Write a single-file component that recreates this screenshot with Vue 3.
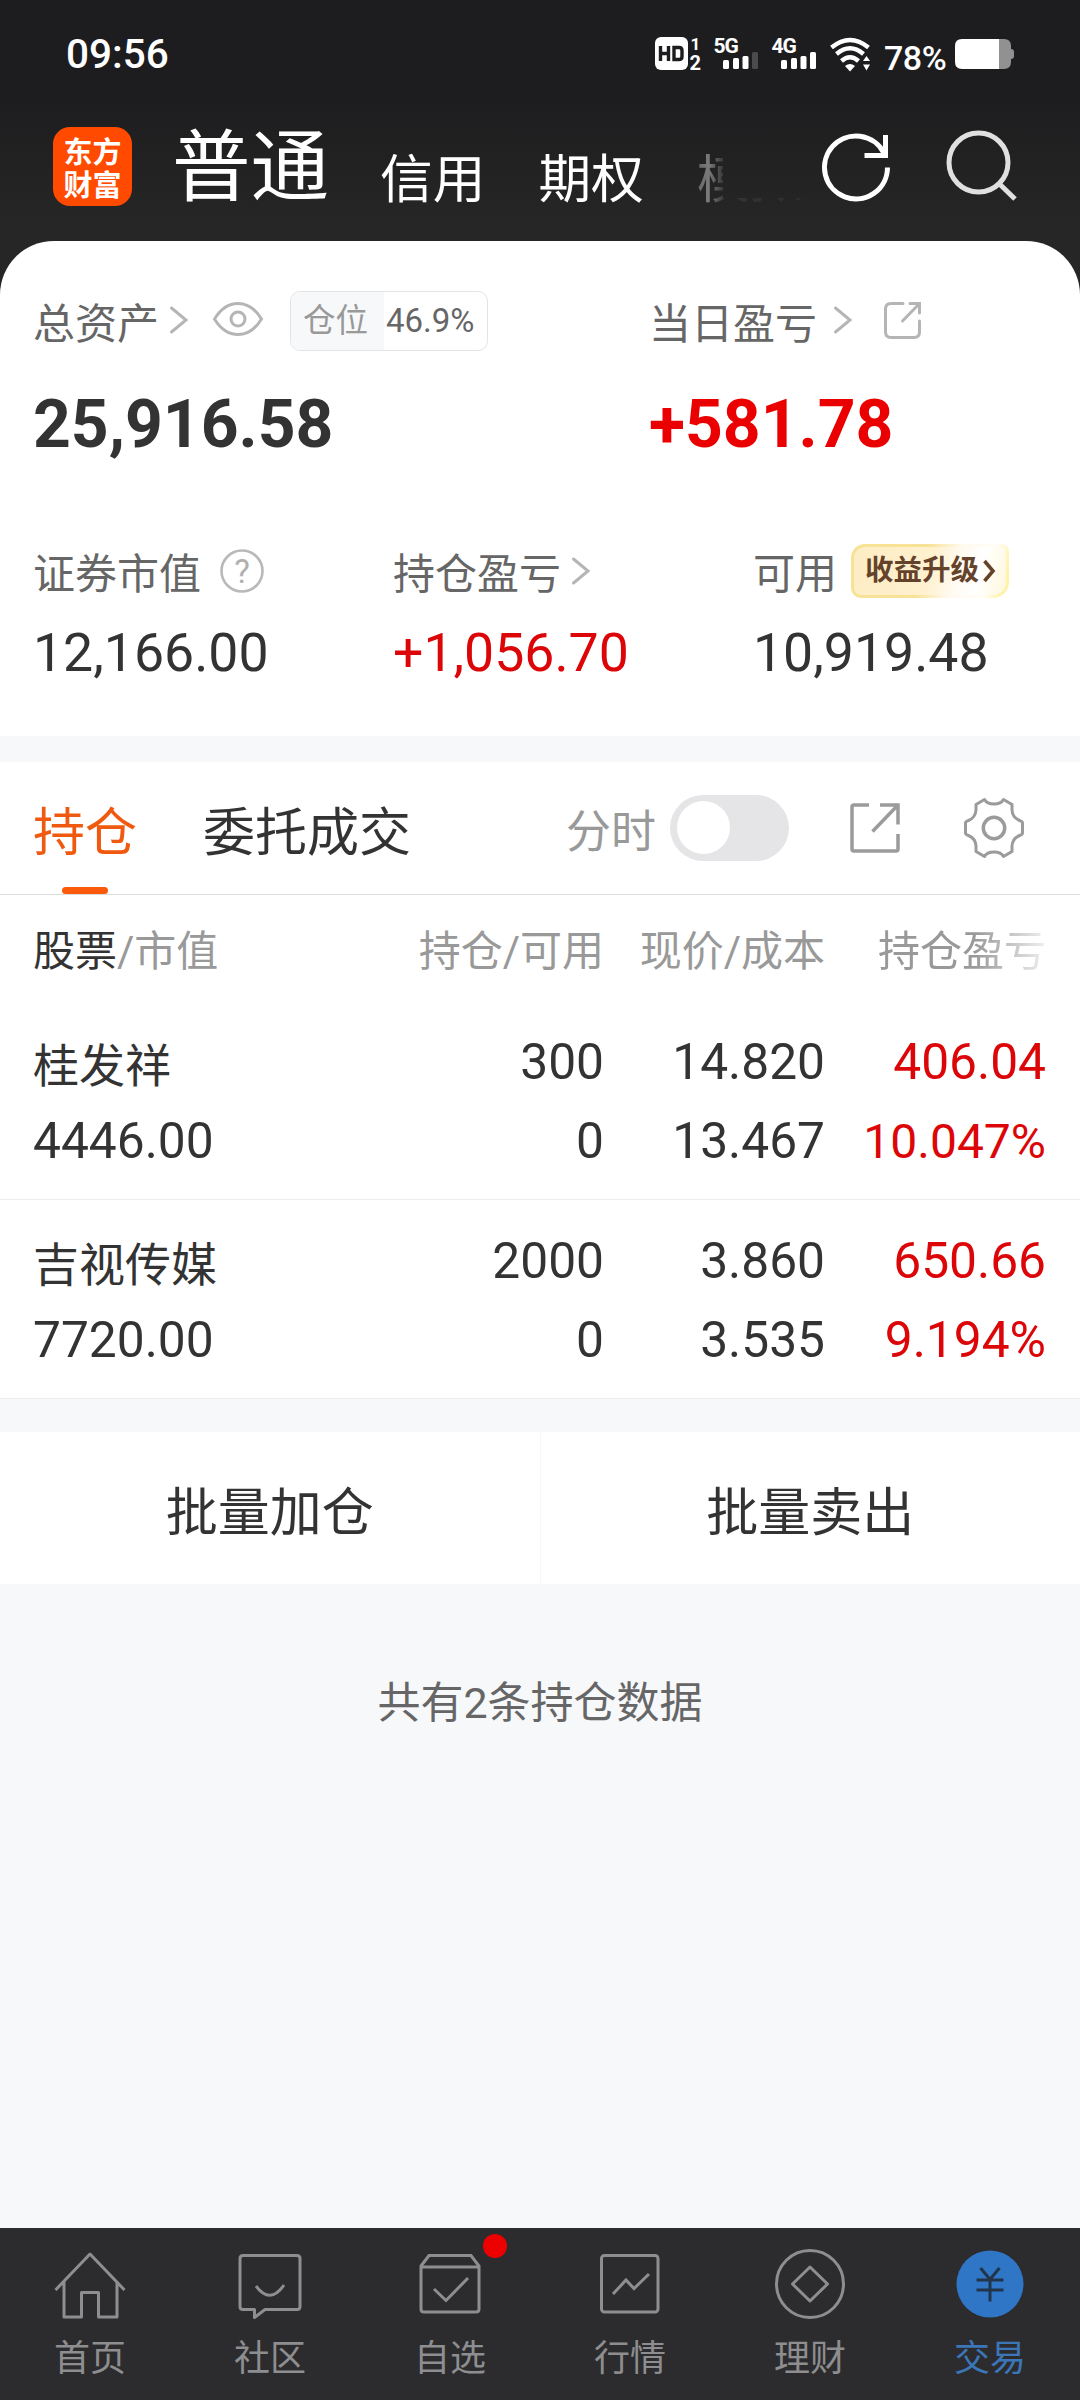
<script setup>
const accountTabs = ['信用', '期权']

const metrics = [
  { label: '证券市值', value: '12,166.00', icon: 'help' },
  { label: '持仓盈亏', value: '+1,056.70', icon: 'chevron', up: true },
  { label: '可用', value: '10,919.48', icon: 'promo' },
]

const holdings = [
  { name: '桂发祥', market: '4446.00', qty: '300', usable: '0', price: '14.820', cost: '13.467', profit: '406.04', rate: '10.047%' },
  { name: '吉视传媒', market: '7720.00', qty: '2000', usable: '0', price: '3.860', cost: '3.535', profit: '650.66', rate: '9.194%' },
]

const navItems = [
  { key: 'home', label: '首页' },
  { key: 'community', label: '社区' },
  { key: 'watch', label: '自选', dot: true },
  { key: 'market', label: '行情' },
  { key: 'wealth', label: '理财' },
  { key: 'trade', label: '交易', active: true },
]
</script>

<template>
  <div class="screen">
    <header class="top">
      <div class="status">
        <span class="clock">09:56</span>
        <div class="status-icons">
          <svg class="i-hd" width="47" height="36" viewBox="0 0 47 36">
            <rect x="0" y="1" width="33" height="33" rx="6" fill="#fff" />
            <path d="M5.500 10v15M13.500 10v15M5.500 17.500h8M19 11.500h5q3 0 3 3v6q0 3-3 3h-5z" fill="none" stroke="#1d1d1f" stroke-width="3.400" />
            <text x="35.500" y="14" class="tiny">1</text>
            <text x="34.500" y="33.500" class="tiny wide">2</text>
          </svg>
          <svg class="i-net" width="46" height="36" viewBox="0 0 46 36">
            <text x="-0.500" y="16.500" class="net">5G</text>
            <g fill="#fff">
              <rect x="9" y="24" width="6" height="9" rx="1.500" />
              <rect x="19" y="22" width="6" height="11" rx="1.500" />
              <rect x="28.500" y="20" width="6" height="13" rx="1.500" />
              <rect x="38" y="16" width="6" height="17" rx="1.500" fill="#4b4b4d" />
            </g>
          </svg>
          <svg class="i-net" width="46" height="36" viewBox="0 0 46 36">
            <text x="-0.500" y="16.500" class="net">4G</text>
            <g fill="#fff">
              <rect x="9" y="24" width="6" height="9" rx="1.500" />
              <rect x="19" y="22" width="6" height="11" rx="1.500" />
              <rect x="28.500" y="20" width="6" height="13" rx="1.500" />
              <rect x="38" y="16" width="6" height="17" rx="1.500" />
            </g>
          </svg>
          <svg class="i-wifi" width="42" height="36" viewBox="0 0 42 36">
            <g fill="none" stroke="#fff" stroke-width="4.400">
              <path d="M1.500 11.500Q20 -3.500 38.500 11.500" />
              <path d="M6.500 18Q20 6.500 33.500 18" />
              <path d="M11.500 25Q20 17.500 28.500 25" />
            </g>
            <path d="M15 30q5-4 10 0l-5 5.500z" fill="#fff" />
            <path d="M33 25l3.500-5 3.500 5zM33 28.500h7l-3.500 6z" fill="#fff" />
          </svg>
          <span class="percent">78%</span>
          <svg width="60" height="32" viewBox="0 0 60 32">
            <path d="M44 1h5q7 0 7 7v3q3 0 3 3v4q0 3-3 3v3q0 7-7 7h-5z" fill="#919191" />
            <path d="M7 1h37v30H7q-7 0-7-7V8q0-7 7-7z" fill="#fff" />
          </svg>
        </div>
      </div>
      <div class="titlebar">
        <div class="logo"><span>东方</span><span>财富</span></div>
        <span class="title">普通</span>
        <span v-for="t in accountTabs" :key="t" class="acct">{{ t }}</span>
        <span class="acct faded">模拟</span>
        <svg class="refresh" width="72" height="72" viewBox="0 0 72 72" fill="none" stroke="#fff" stroke-width="5">
          <path d="M67.500 36.500A31.500 31.500 0 1 1 64 22" />
          <path d="M65.500 4v20.500H44.500" />
        </svg>
        <svg width="72" height="72" viewBox="0 0 72 72" fill="none" stroke="#e0e0e0" stroke-width="5">
          <circle cx="32.500" cy="31.500" r="29.500" />
          <path d="M53 52.500l16 15.500" />
        </svg>
      </div>
    </header>

    <section class="assets">
      <div class="summary">
        <div>
          <div class="label-row">
            <span class="label">总资产</span>
            <svg class="chev c1" width="20" height="30" viewBox="0 0 20 30"><path d="M2.500 3l14.500 12-14.500 12" /></svg>
            <svg class="eye" width="54" height="40" viewBox="0 0 54 40" fill="none" stroke="#b5b5b5" stroke-width="3">
              <path d="M3.500 20C9 11 17 4.500 27 4.500S45 11 50.500 20C45 29 37 35.500 27 35.500S9 29 3.500 20z" />
              <circle cx="27" cy="20" r="7" />
            </svg>
            <span class="position"><span>仓位</span><b>46.9%</b></span>
          </div>
          <div class="total">25,916.58</div>
        </div>
        <div>
          <div class="label-row">
            <span class="label">当日盈亏</span>
            <svg class="chev c2" width="20" height="30" viewBox="0 0 20 30"><path d="M2.500 3l14.500 12-14.500 12" /></svg>
            <svg class="share-s" width="40" height="40" viewBox="0 0 40 40" fill="none" stroke="#b5b5b5" stroke-width="3" stroke-linecap="round">
              <path d="M20 2.500H8Q2.500 2.500 2.500 8v23q0 5.500 5.500 5.500h23q5.500 0 5.500-5.500V20M27 2.500h9.500V12M36 3L19.500 20" />
            </svg>
          </div>
          <div class="total up">+581.78</div>
        </div>
      </div>
      <div class="metrics">
        <div v-for="m in metrics" :key="m.label">
          <div class="label-row short">
            <span class="label">{{ m.label }}</span>
            <svg v-if="m.icon === 'help'" class="help" width="46" height="46" viewBox="0 0 46 46">
              <circle cx="23" cy="23" r="20.500" fill="none" stroke="#b9b9b9" stroke-width="2.600" />
              <text x="23" y="34.500" text-anchor="middle">?</text>
            </svg>
            <svg v-else-if="m.icon === 'chevron'" class="chev c3" width="20" height="30" viewBox="0 0 20 30"><path d="M2.500 3l14.500 12-14.500 12" /></svg>
            <span v-else class="promo">
              <span>收益升级</span>
              <svg width="14" height="24" viewBox="0 0 14 24"><path d="M2.500 2l8.500 10-8.500 10" fill="none" stroke="#65432b" stroke-width="3.600" /></svg>
            </span>
          </div>
          <div class="metric" :class="{ up: m.up }">{{ m.value }}</div>
        </div>
      </div>
    </section>

    <section class="book">
      <div class="tabs">
        <span class="tab on">持仓</span>
        <span class="tab">委托成交</span>
        <span class="minute">分时</span>
        <span class="switch"><i></i></span>
        <svg class="share-l" width="54" height="54" viewBox="0 0 54 54" fill="none" stroke="#9b9b9b" stroke-width="3.500">
          <path d="M21 4H6Q4 4 4 6v42q0 2 2 2h42q2 0 2-2V33M32 4h18v19.500M50 4L24.500 30.500" />
        </svg>
        <svg width="64" height="64" viewBox="0 0 64 64" fill="none" stroke="#9b9b9b" stroke-width="3" stroke-linejoin="round">
          <path d="M22.500 3.500Q25 8 32 8T41.500 3.500L50 8.500V14Q50.500 21.500 57.500 24.500Q60.500 25.500 60.500 27V37Q60.500 38.500 57.500 39.500Q50.500 42.500 50 50V55.500L41.500 60.500Q39 56 32 56T22.500 60.500L14 55.500V50Q13.500 42.500 6.500 39.500Q3.500 38.500 3.500 37V27Q3.500 25.500 6.500 24.500Q13.500 21.500 14 14V8.500z" />
          <circle cx="32" cy="32" r="10.700" stroke-width="3.500" />
        </svg>
      </div>
      <div class="grid head">
        <span><em>股票</em>/市值</span>
        <span>持仓/可用</span>
        <span>现价/成本</span>
        <span class="fade">持仓盈亏</span>
      </div>
      <div v-for="h in holdings" :key="h.name" class="grid row">
        <div><p class="name">{{ h.name }}</p><p>{{ h.market }}</p></div>
        <div><p>{{ h.qty }}</p><p>{{ h.usable }}</p></div>
        <div><p>{{ h.price }}</p><p>{{ h.cost }}</p></div>
        <div class="up"><p>{{ h.profit }}</p><p :class="{ compact: h.rate.length > 6 }">{{ h.rate }}</p></div>
      </div>
    </section>

    <div class="actions">
      <button>批量加仓</button>
      <button>批量卖出</button>
    </div>
    <p class="count">共有2条持仓数据</p>

    <nav class="nav">
      <div v-for="n in navItems" :key="n.key" class="nav-item" :class="{ active: n.active }">
        <svg width="72" height="72" viewBox="0 0 72 72" fill="none" stroke="#8e8e90" stroke-width="3">
          <template v-if="n.key === 'home'">
            <path d="M1.500 42L36 6l34.500 36M10 34v35h17.500V44.500h17V69H63V34" stroke-linejoin="round" />
          </template>
          <template v-else-if="n.key === 'community'">
            <path d="M9 7.500h54q3 0 3 3v48q0 3-3 3H31l-10.500 8v-8H9q-3 0-3-3v-48q0-3 3-3z" stroke-linejoin="round" />
            <path d="M22 38q14 19 28-1" />
          </template>
          <template v-else-if="n.key === 'watch'">
            <path d="M7 18l8-10.500h42L65 18v43q0 3-3 3H10q-3 0-3-3zM7 19h58M20 41l12 11.500L54 30" />
          </template>
          <template v-else-if="n.key === 'market'">
            <rect x="7.500" y="7.500" width="56.500" height="56.500" rx="3" />
            <path d="M19 46l13-14 8 8.500L55 26" />
          </template>
          <template v-else-if="n.key === 'wealth'">
            <circle cx="36" cy="36" r="33.500" />
            <path d="M36 19l17.500 17L36 53 18.500 36z" stroke-linejoin="round" />
          </template>
          <template v-else>
            <circle cx="36" cy="36" r="33.500" fill="#2f76c6" stroke="none" />
            <path d="M26.500 20L36 31.500 45.500 20M36 31v22.500M22.500 32h27M22.500 42h27" stroke="#22344a" />
          </template>
        </svg>
        <i v-if="n.dot" class="dot"></i>
        <span>{{ n.label }}</span>
      </div>
    </nav>
  </div>
</template>

<style>
body { background: #f7f8fa; }
</style>

<style scoped>
* { box-sizing: border-box; }
.screen {
  display: flex;
  flex-direction: column;
  width: 1080px;
  height: 2400px;
  overflow: hidden;
  background: #f7f8fa;
  color: #333;
  font-family: Roboto, "Noto Sans CJK SC", sans-serif;
  white-space: nowrap;
}
p { margin: 0; }
svg { display: block; flex: none; overflow: visible; }
.up { color: #dc0608; }

.top {
  height: 295px;
  flex: none;
  background: linear-gradient(#1d1d1f 0, #1d1d1f 95px, #262626 225px);
  color: #fff;
}
.status {
  display: flex;
  justify-content: space-between;
  align-items: center;
  height: 108px;
  padding: 0 65px 0 66px;
}
.clock { font-size: 40.5px; font-weight: 500; }
.status-icons { display: flex; align-items: center; }
.i-hd, .i-net, .i-wifi { margin-right: 12px; }
.tiny { font: 700 17px Roboto, sans-serif; fill: #fff; }
.wide { font-size: 20px; }
.net { font: 700 21px Roboto, sans-serif; fill: #fff; letter-spacing: -1px; }
.percent { width: 71px; padding-top: 7px; font-size: 34px; font-weight: 500; line-height: 40px; letter-spacing: -0.5px; }

.titlebar {
  display: flex;
  align-items: center;
  height: 117px;
  padding: 0 30px 0 53px;
}
.logo {
  display: flex;
  flex-direction: column;
  align-items: center;
  justify-content: center;
  width: 79px;
  height: 79px;
  margin-right: 40px;
  border-radius: 17px;
  background: #ff4a00;
  font-family: "Noto Sans CJK SC", sans-serif;
  font-weight: 700;
  font-size: 29px;
  line-height: 33px;
}
.title { margin-right: 51px; padding-top: 2px; font-size: 78.5px; line-height: 90px; }
.acct { margin-right: 53px; padding-top: 26px; font-size: 52.7px; line-height: 64px; }
.faded {
  margin-right: 18px;
  mask-image: linear-gradient(90deg, rgba(0, 0, 0, 0.3), rgba(0, 0, 0, 0.4) 12px, rgba(0, 0, 0, 0.1)), linear-gradient(90deg, rgba(0, 0, 0, 0.07), rgba(0, 0, 0, 0.05));
  mask-size: 26px 100%, 100% 14px;
  mask-position: 0 0, 26px 100%;
  mask-repeat: no-repeat;
}
.refresh { margin-right: 54px; }

.assets {
  height: 495px;
  margin-top: -54px;
  flex: none;
  padding-left: 33px;
  border-radius: 54px 54px 0 0;
  background: #fff;
}
.summary { display: grid; grid-template-columns: 616px 1fr; padding-top: 49px; }
.label-row { display: flex; align-items: center; height: 62px; }
.label-row.short { height: 60px; }
.label { padding-top: 8px; font-size: 42px; line-height: 52px; color: #666; }
.chev path { fill: none; stroke: #b5b5b5; stroke-width: 3; stroke-linecap: round; }
.c1 { margin: 0 0 2px 10px; }
.c2 { margin: 0 0 2px 16px; }
.c3 { margin-left: 10px; }
.eye { margin: 0 25px 4px 22px; }
.position {
  display: flex;
  width: 198px;
  height: 60px;
  border: 1px solid #e4e4e6;
  border-radius: 10px;
  overflow: hidden;
  color: #666;
  font-size: 33px;
  line-height: 58px;
}
.position span { width: 93px; padding-left: 12px; background: #f7f8fa; color: #999; font-size: 32.5px; }
.position b { padding-left: 2px; font-weight: 400; }
.share-s { margin-left: 30px; }
.total { height: 79px; margin-top: 33px; font-size: 66px; line-height: 79px; font-weight: 700; }
.total.up { color: #ea0000; }
.metrics { display: grid; grid-template-columns: 360px 360px 1fr; margin-top: 77px; }
.help { margin-left: 18px; }
.help text { font: 33px Roboto, sans-serif; fill: #b0b0b0; }
.metric { height: 64px; margin-top: 20px; font-size: 53.6px; line-height: 64px; }
.promo {
  display: flex;
  align-items: center;
  gap: 3px;
  width: 158px;
  height: 54px;
  margin-left: 14px;
  padding-left: 11px;
  border: 3px solid transparent;
  border-radius: 14px 8px 16px 10px;
  background:
    linear-gradient(105deg, #fdedc4, #fff1cf 50%, #fffaf0 66%, #fff 80%, #fff8dc) padding-box,
    linear-gradient(105deg, #f8e296 45%, #fffaf0 65%, #fffdf5 85%, #fff3a8 95%) border-box;
  color: #65432b;
  font-size: 28.5px;
  font-weight: 700;
}
.promo span { line-height: 40px; }

.book { flex: none; margin-top: 26px; background: #fff; }
.tabs {
  display: flex;
  align-items: center;
  height: 133px;
  padding: 0 54px 0 33px;
  border-bottom: 1px solid #dcdcdc;
}
.tab { margin-right: 66px; padding-top: 11px; font-size: 52px; line-height: 64px; }
.tab.on { position: relative; color: #f05a10; }
.tab.on::after {
  content: "";
  position: absolute;
  left: 29px;
  bottom: -28px;
  width: 46px;
  height: 7px;
  border-radius: 4px;
  background: #fa5a0a;
}
.minute { margin-left: auto; padding-top: 10px; font-size: 45px; line-height: 56px; color: #999; }
.switch {
  width: 119px;
  height: 66px;
  margin: 0 59px 0 14px;
  padding: 6px 7px;
  border-radius: 33px;
  background: #e5e5e7;
}
.switch i { display: block; width: 53px; height: 53px; border-radius: 50%; background: #fff; }
.share-l { margin-right: 60px; }
.grid {
  display: grid;
  grid-template-columns: 301px 270px 221px 221px;
  padding-left: 33px;
  text-align: right;
}
.grid > :first-child { text-align: left; }
.head { height: 106px; padding-top: 7px; color: #999; font-size: 42px; line-height: 99px; }
.head em { font-style: normal; color: #333; }
.fade { mask-image: linear-gradient(90deg, #000 150px, rgba(0, 0, 0, 0.15) 100%); }
.row { height: 199px; padding-top: 22px; border-bottom: 1px solid #ececee; font-size: 49.7px; line-height: 79px; }
.row p { height: 79px; }
.row .name { padding-top: 4px; font-size: 46px; }
.row .compact { font-size: 48px; }

.actions { display: flex; flex: none; height: 152px; margin-top: 33px; background: #fff; }
.actions button {
  flex: 1;
  padding: 1px 0 0;
  border: 0;
  border-right: 1px solid #f7f7f8;
  background: none;
  color: #333;
  font: inherit;
  font-size: 52px;
}
.actions button:last-child { border: 0; }
.count { margin-top: 87px; font-size: 43px; line-height: 64px; text-align: center; color: #666; }

.nav { display: flex; height: 172px; margin-top: auto; background: #2c2c2e; }
.nav-item {
  position: relative;
  display: flex;
  flex-direction: column;
  align-items: center;
  width: 180px;
  padding-top: 20px;
  color: #8e8e90;
  font-size: 36px;
  line-height: 44px;
}
.nav-item span { margin-top: 17px; }
.nav-item.active { color: #3b76b8; }
.dot { position: absolute; left: 123px; top: 6px; width: 24px; height: 24px; border-radius: 50%; background: #ed0000; }
</style>
